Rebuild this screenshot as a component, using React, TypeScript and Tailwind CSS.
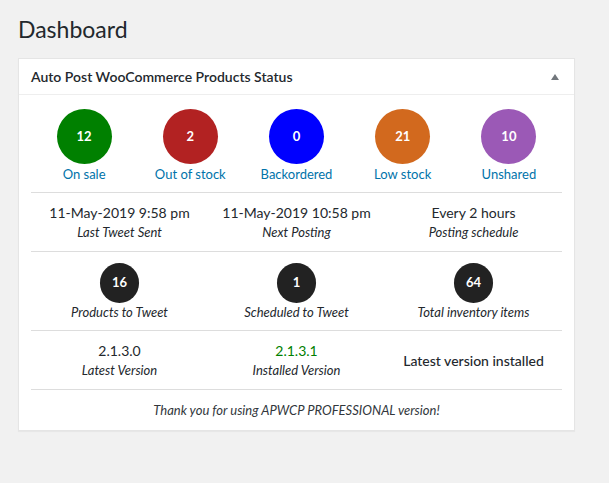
import React from 'react';

const statusCircles = [
  { value: '12', label: 'On sale', color: 'bg-[#008000]' },
  { value: '2', label: 'Out of stock', color: 'bg-[#b22222]' },
  { value: '0', label: 'Backordered', color: 'bg-[#0000ff]' },
  { value: '21', label: 'Low stock', color: 'bg-[#d2691e]' },
  { value: '10', label: 'Unshared', color: 'bg-[#9b59b6]' },
];

const schedule = [
  { value: '11-May-2019 9:58 pm', label: 'Last Tweet Sent' },
  { value: '11-May-2019 10:58 pm', label: 'Next Posting' },
  { value: 'Every 2 hours', label: 'Posting schedule' },
];

const counts = [
  { value: '16', label: 'Products to Tweet' },
  { value: '1', label: 'Scheduled to Tweet' },
  { value: '64', label: 'Total inventory items' },
];

const App: React.FC = () => {
  return (
    <div className="min-h-[483px] bg-[#f1f1f1] px-[18px] pt-[15px] font-['Lato',sans-serif] text-[#32373c]">
      <h1 className="text-[23px] leading-[29px] font-normal text-[#23282d] mb-[14px]">Dashboard</h1>

      <div className="w-[557px] bg-white border border-[#e5e5e5] shadow-[0_1px_1px_rgba(0,0,0,0.04)]">
        <div className="flex items-center justify-between h-[36px] px-[12px] border-b border-[#eee]">
          <h2 className="text-[14px] font-semibold text-[#23282d]">Auto Post WooCommerce Products Status</h2>
          <svg width="8" height="6" viewBox="0 0 8 6" className="mr-[3px]">
            <path d="M4 0 L8 6 L0 6 Z" fill="#72777c" />
          </svg>
        </div>

        <div className="px-[12px]">
          <div className="grid grid-cols-5 pt-[14px] pb-[8px] border-b border-[#ddd]">
            {statusCircles.map((s) => (
              <div key={s.label} className="flex flex-col items-center">
                <div className={`w-[55px] h-[55px] rounded-full ${s.color} flex items-center justify-center text-white text-[13px] font-bold`}>
                  {s.value}
                </div>
                <span className="text-[13px] leading-[20px] text-[#0073aa]">{s.label}</span>
              </div>
            ))}
          </div>

          <div className="grid grid-cols-3 pt-[10px] pb-[10px] border-b border-[#ddd]">
            {schedule.map((s) => (
              <div key={s.label} className="flex flex-col items-center">
                <span className="text-[14px] leading-[20px] text-[#23282d]">{s.value}</span>
                <em className="text-[13px] leading-[18px] text-[#23282d]">{s.label}</em>
              </div>
            ))}
          </div>

          <div className="grid grid-cols-3 pt-[11px] pb-[9px] border-b border-[#ddd]">
            {counts.map((c) => (
              <div key={c.label} className="flex flex-col items-center">
                <div className="w-[39px] h-[40px] rounded-full bg-[#222] flex items-center justify-center text-white text-[13px] font-bold">
                  {c.value}
                </div>
                <em className="text-[13px] leading-[18px] text-[#23282d]">{c.label}</em>
              </div>
            ))}
          </div>

          <div className="grid grid-cols-3 pt-[10px] pb-[10px] border-b border-[#ddd]">
            <div className="flex flex-col items-center">
              <span className="text-[14px] leading-[20px] text-[#23282d]">2.1.3.0</span>
              <em className="text-[13px] leading-[18px] text-[#23282d]">Latest Version</em>
            </div>
            <div className="flex flex-col items-center">
              <span className="text-[14px] leading-[20px] text-[#008000]">2.1.3.1</span>
              <em className="text-[13px] leading-[18px] text-[#23282d]">Installed Version</em>
            </div>
            <div className="flex items-center justify-center">
              <span className="text-[14px] font-medium text-[#23282d]">Latest version installed</span>
            </div>
          </div>

          <div className="pt-[7px] pb-[9px] text-center">
            <em className="text-[13px] leading-[20px] text-[#32373c]">Thank you for using APWCP PROFESSIONAL version!</em>
          </div>
        </div>
      </div>
    </div>
  );
};

export default App;
